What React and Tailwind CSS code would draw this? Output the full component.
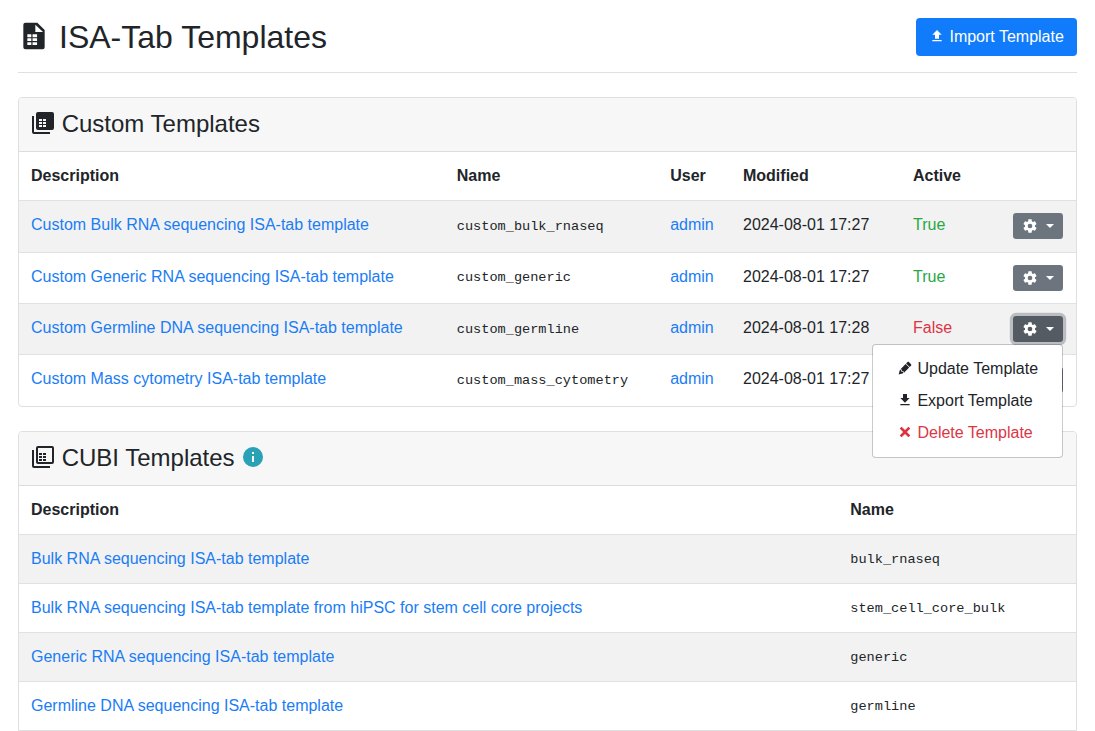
import React from 'react';

const P = {
  cog: "M12,15.5A3.5,3.5 0 0,1 8.5,12A3.5,3.5 0 0,1 12,8.5A3.5,3.5 0 0,1 15.5,12A3.5,3.5 0 0,1 12,15.5M19.43,12.97C19.47,12.65 19.5,12.33 19.5,12C19.5,11.67 19.47,11.34 19.43,11L21.54,9.37C21.73,9.22 21.78,8.95 21.66,8.73L19.66,5.27C19.54,5.05 19.27,4.96 19.05,5.05L16.56,6.05C16.04,5.66 15.5,5.32 14.87,5.07L14.5,2.42C14.46,2.18 14.25,2 14,2H10C9.75,2 9.54,2.18 9.5,2.42L9.13,5.07C8.5,5.32 7.96,5.66 7.44,6.05L4.95,5.05C4.73,4.96 4.46,5.05 4.34,5.27L2.34,8.73C2.21,8.95 2.27,9.22 2.46,9.37L4.57,11C4.53,11.34 4.5,11.67 4.5,12C4.5,12.33 4.53,12.65 4.57,12.97L2.46,14.63C2.27,14.78 2.21,15.05 2.34,15.27L4.34,18.73C4.46,18.95 4.73,19.03 4.95,18.95L7.44,17.94C7.96,18.34 8.5,18.68 9.13,18.93L9.5,21.58C9.54,21.82 9.75,22 10,22H14C14.25,22 14.46,21.82 14.5,21.58L14.87,18.93C15.5,18.67 16.04,18.34 16.56,17.94L19.05,18.95C19.27,19.03 19.54,18.95 19.66,18.73L21.66,15.27C21.78,15.05 21.73,14.78 21.54,14.63L19.43,12.97Z",
  upload: "M9,16V10H5L12,3L19,10H15V16H9M5,20V18H19V20H5Z",
  download: "M5,20H19V18H5M19,9H15V3H9V9H5L12,16L19,9Z",
  pencil: "M16.84,2.73C16.45,2.73 16.07,2.88 15.77,3.17L13.65,5.29L18.95,10.6L21.07,8.5C21.67,7.89 21.67,6.94 21.07,6.36L17.9,3.17C17.6,2.88 17.22,2.73 16.84,2.73M12.94,6L4.84,14.11L7.4,14.39L7.58,16.68L9.86,16.85L10.15,19.41L18.25,11.3M4.25,15.04L2.5,21.73L9.2,19.94L8.96,17.78L6.65,17.61L6.47,15.29",
  close: "M20 6.91L17.09 4L12 9.09L6.91 4L4 6.91L9.09 12L4 17.09L6.91 20L12 14.91L17.09 20L20 17.09L14.91 12L20 6.91Z",
  info: "M13,9H11V7H13M13,17H11V11H13M12,2A10,10 0 0,0 2,12A10,10 0 0,0 12,22A10,10 0 0,0 22,12A10,10 0 0,0 12,2Z",
  file: "M5.5 2A1.5 1.5 0 0 0 4 3.5V20.5A1.5 1.5 0 0 0 5.5 22H18.5A1.5 1.5 0 0 0 20 20.5V7.5L14.5 2ZM13 3.5V9H18.8ZM7 10.75H10V12.9H7ZM10.9 10.75H14.3V12.9H10.9ZM7 13.75H10V15.8H7ZM10.9 13.75H14.3V15.8H10.9ZM7 16.7H10V18.8H7ZM10.9 16.7H14.3V18.8H10.9Z",
  stack: "M1 5H3V21H19V23H3A2 2 0 0 1 1 21ZM7 1H21A2 2 0 0 1 23 3V17A2 2 0 0 1 21 19H7A2 2 0 0 1 5 17V3A2 2 0 0 1 7 1ZM8 8H11V10H8ZM12 8H15V10H12ZM8 11H11V13H8ZM12 11H15V13H12ZM8 14H11V16H8ZM12 14H15V16H12Z",
  stackOutline: "M1 5H3V21H19V23H3A2 2 0 0 1 1 21ZM7 1H21A2 2 0 0 1 23 3V17A2 2 0 0 1 21 19H7A2 2 0 0 1 5 17V3A2 2 0 0 1 7 1ZM7 3V17H21V3ZM8 8V10H11V8ZM12 8V10H15V8ZM8 11V13H11V11ZM12 11V13H15V11ZM8 14V16H11V14ZM12 14V16H15V14Z",
};

function Icon({ name, className }) {
  return (
    <svg viewBox="0 0 24 24" fill="currentColor" fillRule="evenodd" className={'shrink-0 ' + className}>
      <path d={P[name]} />
    </svg>
  );
}

const custom = [
  ['Custom Bulk RNA sequencing ISA-tab template', 'custom_bulk_rnaseq', '2024-08-01 17:27', true, 'h-[52px]', 'pt-[14px]'],
  ['Custom Generic RNA sequencing ISA-tab template', 'custom_generic', '2024-08-01 17:27', true, 'h-[51px]', 'pt-[13px]'],
  ['Custom Germline DNA sequencing ISA-tab template', 'custom_germline', '2024-08-01 17:28', false, 'h-[51px]', 'pt-[14px]'],
  ['Custom Mass cytometry ISA-tab template', 'custom_mass_cytometry', '2024-08-01 17:27', true, 'h-[51px]', 'pt-[14px]'],
];

const cubi = [
  ['Bulk RNA sequencing ISA-tab template', 'bulk_rnaseq'],
  ['Bulk RNA sequencing ISA-tab template from hiPSC for stem cell core projects', 'stem_cell_core_bulk'],
  ['Generic RNA sequencing ISA-tab template', 'generic'],
  ['Germline DNA sequencing ISA-tab template', 'germline'],
];

function Menu() {
  return (
    <div className="absolute right-0 top-[28px] z-10 flex h-[114px] w-[191px] flex-col rounded border border-black/20 bg-white bg-clip-padding pb-[7px] pt-2 text-[#212529]">
      <a className="flex h-8 items-center pl-6"><Icon name="pencil" className="-mt-0.5 mr-[4.45px] h-4 w-4" />Update Template</a>
      <a className="flex h-8 items-center pl-6"><Icon name="download" className="-mt-0.5 mr-[4.45px] h-4 w-4" />Export Template</a>
      <a className="flex h-8 items-center pl-6 text-[#dc3545]"><Icon name="close" className="-mt-0.5 mr-[4.45px] h-4 w-4" />Delete Template</a>
    </div>
  );
}

function Options({ open }) {
  return (
    <div className="relative mt-3 h-[26px] w-[50px]">
      <button className={'flex h-[26px] w-[50px] items-center rounded-[3.2px] pl-[9px] text-white ' + (open ? 'bg-[#545b62] shadow-[0_0_0_3.2px_#babec2]' : 'bg-[#6c757d]')}>
        <Icon name="cog" className="h-4 w-4" />
        <svg viewBox="0 0 8 4" fill="currentColor" className="ml-2 h-1 w-2"><path d="M0 0H8L4 4Z" /></svg>
      </button>
      {open && <Menu />}
    </div>
  );
}

export default function App() {
  return (
    <div className="h-[731px] overflow-hidden bg-white px-[18px] font-['Liberation_Sans',Arial,sans-serif] text-base leading-6 text-[#212529]">
      <header className="flex h-[73px] items-start justify-between border-b border-[#dee0e2] pt-[18px]">
        <h1 className="flex h-[38px] items-center text-[32px] leading-[38px]">
          <Icon name="file" className="-mt-0.5 mr-[9px] h-8 w-8" />ISA-Tab Templates
        </h1>
        <button className="flex h-[38px] w-[161px] items-center rounded bg-[#107cfb] pl-[13px] text-white">
          <Icon name="upload" className="-mt-0.5 mr-[4.45px] h-4 w-4" />Import Template
        </button>
      </header>

      <section className="mt-6 h-[310px] rounded border border-[#dfdfdf]">
        <h2 className="flex h-[54px] items-center rounded-t-[3px] border-b border-[#dcdddd] bg-[#f7f7f7] pb-px pl-3 text-2xl">
          <Icon name="stack" className="-mt-0.5 mr-[6.67px] h-6 w-6" />Custom Templates
        </h2>
        <div className="grid h-[48px] grid-cols-[425.8px_213.4px_72.8px_170px_100px_1fr] pl-3 pt-3 font-bold">
          <span>Description</span><span>Name</span><span>User</span><span>Modified</span><span>Active</span>
        </div>
        {custom.map(([desc, name, date, active, height, codePad], i) => (
          <div key={name} className={'grid grid-cols-[425.8px_213.4px_72.8px_170px_100px_1fr] items-start border-t border-[#dee2e6] pl-3 ' + height + (i % 2 ? '' : ' bg-[#f2f2f2]')}>
            <a className="pt-3 text-[#1a7df5]">{desc}</a>
            <code className={"font-['Liberation_Mono',monospace] text-[13.6px] " + codePad}>{name}</code>
            <a className="pt-3 text-[#1a7df5]">admin</a>
            <span className="pt-3">{date}</span>
            <span className={'pt-3 ' + (active ? 'text-[#28a745]' : 'text-[#dc3545]')}>{active ? 'True' : 'False'}</span>
            <Options open={i === 2} />
          </div>
        ))}
      </section>

      <section className="mt-6 h-[300px] rounded-t border border-[#dfdfdf]">
        <h2 className="flex h-[54px] items-center rounded-t-[3px] border-b border-[#dcdddd] bg-[#f7f7f7] pb-px pl-3 text-2xl">
          <Icon name="stackOutline" className="-mt-0.5 mr-[6.67px] h-6 w-6" />CUBI Templates
          <Icon name="info" className="-mt-0.5 ml-[6px] h-6 w-6 text-[#2aa2b6]" />
        </h2>
        <div className="grid h-[48px] grid-cols-[819.3px_1fr] pl-3 pt-3 font-bold">
          <span>Description</span><span>Name</span>
        </div>
        {cubi.map(([desc, name], i) => (
          <div key={name} className={'grid h-[49px] grid-cols-[819.3px_1fr] items-start border-t border-[#dee2e6] pl-3 pt-3' + (i % 2 ? '' : ' bg-[#f2f2f2]')}>
            <a className="text-[#1a7df5]">{desc}</a>
            <code className="pt-px font-['Liberation_Mono',monospace] text-[13.6px]">{name}</code>
          </div>
        ))}
      </section>
    </div>
  );
}
